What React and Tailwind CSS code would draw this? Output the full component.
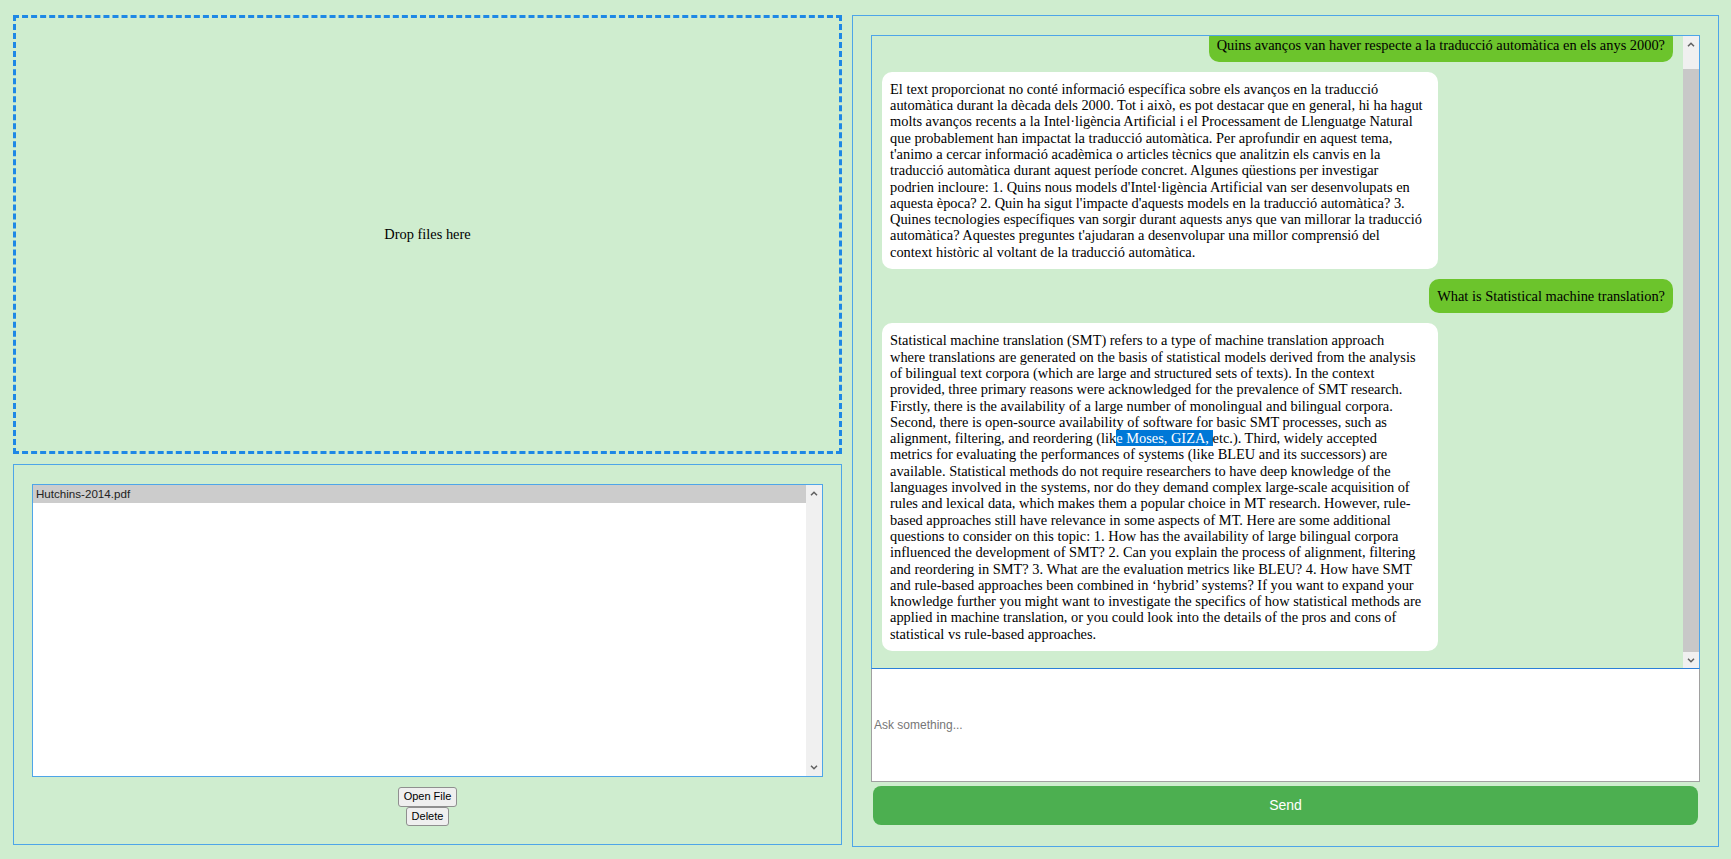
import { useState } from "react";

const serif = { fontFamily: '"Liberation Serif", "Times New Roman", serif' };
const sans = { fontFamily: '"Liberation Sans", Arial, sans-serif' };

// line breaks kept as in the chat window
const RESPONSE_CA = [
  "El text proporcionat no conté informació específica sobre els avanços en la traducció",
  "automàtica durant la dècada dels 2000. Tot i això, es pot destacar que en general, hi ha hagut",
  "molts avanços recents a la Intel·ligència Artificial i el Processament de Llenguatge Natural",
  "que probablement han impactat la traducció automàtica. Per aprofundir en aquest tema,",
  "t'animo a cercar informació acadèmica o articles tècnics que analitzin els canvis en la",
  "traducció automàtica durant aquest període concret. Algunes qüestions per investigar",
  "podrien incloure: 1. Quins nous models d'Intel·ligència Artificial van ser desenvolupats en",
  "aquesta època? 2. Quin ha sigut l'impacte d'aquests models en la traducció automàtica? 3.",
  "Quines tecnologies específiques van sorgir durant aquests anys que van millorar la traducció",
  "automàtica? Aquestes preguntes t'ajudaran a desenvolupar una millor comprensió del",
  "context històric al voltant de la traducció automàtica.",
];

const RESPONSE_SMT = [
  "Statistical machine translation (SMT) refers to a type of machine translation approach",
  "where translations are generated on the basis of statistical models derived from the analysis",
  "of bilingual text corpora (which are large and structured sets of texts). In the context",
  "provided, three primary reasons were acknowledged for the prevalence of SMT research.",
  "Firstly, there is the availability of a large number of monolingual and bilingual corpora.",
  "Second, there is open-source availability of software for basic SMT processes, such as",
  ["alignment, filtering, and reordering (lik", "e Moses, GIZA, ", "etc.). Third, widely accepted"],
  "metrics for evaluating the performances of systems (like BLEU and its successors) are",
  "available. Statistical methods do not require researchers to have deep knowledge of the",
  "languages involved in the systems, nor do they demand complex large-scale acquisition of",
  "rules and lexical data, which makes them a popular choice in MT research. However, rule-",
  "based approaches still have relevance in some aspects of MT. Here are some additional",
  "questions to consider on this topic: 1. How has the availability of large bilingual corpora",
  "influenced the development of SMT? 2. Can you explain the process of alignment, filtering",
  "and reordering in SMT? 3. What are the evaluation metrics like BLEU? 4. How have SMT",
  "and rule-based approaches been combined in ‘hybrid’ systems? If you want to expand your",
  "knowledge further you might want to investigate the specifics of how statistical methods are",
  "applied in machine translation, or you could look into the details of the pros and cons of",
  "statistical vs rule-based approaches.",
];

function Chevron({ up }) {
  return (
    <svg width="8" height="5" viewBox="0 0 8 5" className="block">
      <polyline
        points={up ? "1,4.3 4,1.3 7,4.3" : "1,0.7 4,3.7 7,0.7"}
        fill="none"
        stroke="#606060"
        strokeWidth="1.5"
      />
    </svg>
  );
}

function UserBubble({ children }) {
  return (
    <div className="self-end shrink-0 bg-[#6cc42c] rounded-[10px] px-2 py-[9px] text-[14.4px] leading-[16.3px] text-black whitespace-nowrap">
      {children}
    </div>
  );
}

function BotBubble({ lines }) {
  return (
    <div className="self-start shrink-0 w-[556px] bg-white rounded-[10px] px-2 py-[9px] text-[14.4px] leading-[16.3px] text-black">
      {lines.map((line, i) =>
        Array.isArray(line) ? (
          <div key={i} className="whitespace-nowrap">
            {line[0]}
            <span className="bg-[#0078d7] text-white">{line[1]}</span>
            {line[2]}
          </div>
        ) : (
          <div key={i} className="whitespace-nowrap">{line}</div>
        )
      )}
    </div>
  );
}

export default function App() {
  const [question, setQuestion] = useState("");
  const files = ["Hutchins-2014.pdf"];
  const [selected, setSelected] = useState(0);

  return (
    <div className="h-screen w-full bg-[#cfedcf] flex gap-[10px] pl-[13px] pr-[12px] pt-[15px] pb-[12px]" style={serif}>
      {/* left column */}
      <div className="w-[829px] flex flex-col gap-[10px]">
        <div className="h-[439px] border-[3px] border-dashed border-[#1e88e5] flex items-center justify-center text-[14.4px] text-black">
          Drop files here
        </div>

        <div className="h-[381px] border border-[#4ea5e8] px-[18px] pt-[19px]">
          <div className="h-[293px] border border-[#4ea5e8] bg-white flex">
            <div className="flex-1 flex flex-col" style={sans}>
              {files.map((f, i) => (
                <div
                  key={f}
                  onClick={() => setSelected(i)}
                  className={`h-[18px] px-[3px] text-[11.6px] leading-[18px] text-[#222] ${selected === i ? "bg-[#cccccc]" : ""}`}
                >
                  {f}
                </div>
              ))}
            </div>
            <div className="w-[16px] bg-[#f0f0f0] flex flex-col justify-between">
              <div className="h-[17px] flex items-center justify-center">
                <Chevron up />
              </div>
              <div className="h-[17px] flex items-center justify-center">
                <Chevron />
              </div>
            </div>
          </div>
          <div className="flex flex-col items-center mt-[10px]" style={sans}>
            <button className="h-[19.5px] px-[5px] text-[11px] leading-[13px] text-black bg-[#efefef] border border-[#8f8f8f] rounded-[3px]">
              Open File
            </button>
            <button className="h-[19.5px] px-[5px] text-[11px] leading-[13px] text-black bg-[#efefef] border border-[#8f8f8f] rounded-[3px]">
              Delete
            </button>
          </div>
        </div>
      </div>

      {/* right panel */}
      <div className="flex-1 border border-[#4ea5e8] pt-[19px] px-[18px] flex flex-col">
        <div className="h-[634px] border border-[#4ea5e8] border-b-[#2b7fd8] flex">
          <div className="flex-1 overflow-hidden flex flex-col justify-end gap-[10px] px-[10px] pb-[17px]">
            <UserBubble>Quins avanços van haver respecte a la traducció automàtica en els anys 2000?</UserBubble>
            <BotBubble lines={RESPONSE_CA} />
            <UserBubble>What is Statistical machine translation?</UserBubble>
            <BotBubble lines={RESPONSE_SMT} />
          </div>
          <div className="w-[16px] bg-[#f0f0f0] flex flex-col">
            <div className="h-[17px] flex items-center justify-center">
              <Chevron up />
            </div>
            <div className="h-[16px]" />
            <div className="flex-1 bg-[#c8c8c8]" />
            <div className="h-[16px] flex items-center justify-center">
              <Chevron />
            </div>
          </div>
        </div>

        <input
          value={question}
          onChange={(e) => setQuestion(e.target.value)}
          placeholder="Ask something..."
          className="h-[113px] w-full bg-white border border-t-0 border-[#a0a0a0] px-[2px] text-[12px] text-black placeholder:text-[#767676] outline-none"
          style={sans}
        />

        <button
          className="mt-[4px] mx-[2px] h-[39px] rounded-[8px] bg-[#4caf50] text-white text-[14px]"
          style={sans}
        >
          Send
        </button>
      </div>
    </div>
  );
}
